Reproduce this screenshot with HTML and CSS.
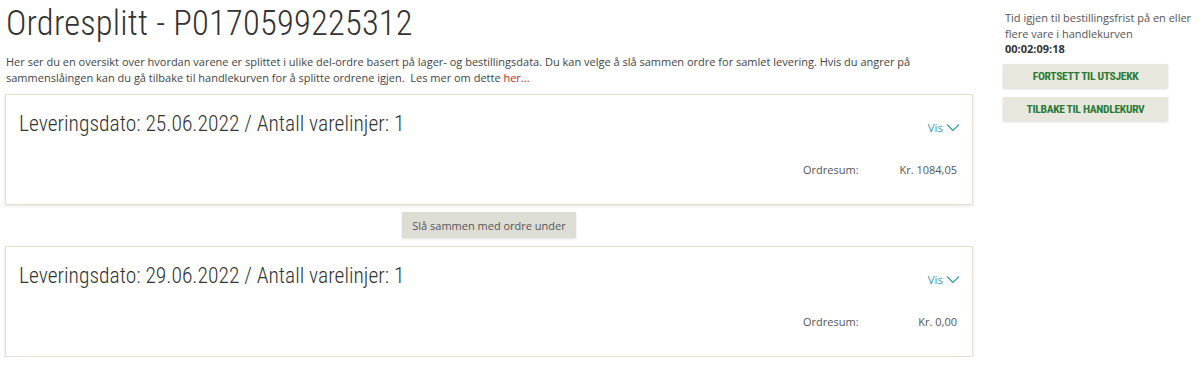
FILE: index.html
```html
<!DOCTYPE html>
<html lang="no">
<head>
<meta charset="utf-8">
<title>Ordresplitt</title>
<link rel="stylesheet" href="styles.css">
</head>
<body>
<div class="page">
  <main class="main">
    <h1 class="title">Ordresplitt - P0170599225312</h1>
    <p class="intro">Her ser du en oversikt over hvordan varene er splittet i ulike del-ordre basert på lager- og bestillingsdata. Du kan velge å slå sammen ordre for samlet levering. Hvis du angrer på sammenslåingen kan du gå tilbake til handlekurven for å splitte ordrene igjen.&nbsp; Les mer om dette <a class="link" href="#">her...</a></p>

    <section class="card">
      <div class="card-head">
        <h2 class="card-title">Leveringsdato: 25.06.2022 / Antall varelinjer: 1</h2>
      </div>
      <div class="card-toggle"><span class="vis">Vis <svg class="chev" viewBox="0 0 14 9" width="14" height="9"><path d="M1 1.5 L7 7.5 L13 1.5" fill="none" stroke="currentColor" stroke-width="1.2"/></svg></span></div>
      <div class="card-sum"><span class="sum-label">Ordresum:</span><span class="sum-value">Kr. 1084,05</span></div>
    </section>

    <div class="merge-row"><button class="merge">Slå sammen med ordre under</button></div>

    <section class="card">
      <div class="card-head">
        <h2 class="card-title">Leveringsdato: 29.06.2022 / Antall varelinjer: 1</h2>
      </div>
      <div class="card-toggle"><span class="vis">Vis <svg class="chev" viewBox="0 0 14 9" width="14" height="9"><path d="M1 1.5 L7 7.5 L13 1.5" fill="none" stroke="currentColor" stroke-width="1.2"/></svg></span></div>
      <div class="card-sum"><span class="sum-label">Ordresum:</span><span class="sum-value">Kr. 0,00</span></div>
    </section>
  </main>

  <aside class="side">
    <p class="deadline">Tid igjen til bestillingsfrist på en eller flere vare i handlekurven<br><strong class="timer">00:02:09:18</strong></p>
    <button class="side-btn">FORTSETT TIL UTSJEKK</button>
    <button class="side-btn">TILBAKE TIL HANDLEKURV</button>
  </aside>
</div>
</body>
</html>
```

FILE: styles.css
```css
* { box-sizing: border-box; }
html, body { margin: 0; padding: 0; background: #fff; }
body {
  font-family: "Open Sans", "Liberation Sans", sans-serif;
  font-size: 11px;
  color: #444;
}
.page {
  display: grid;
  grid-template-columns: 968px 192px;
  column-gap: 30px;
  padding: 0 0 0 5px;
}
.main { display: flex; flex-direction: column; }
.title {
  margin: 0;
  padding: 3px 0 0 1px;
  font-family: "Roboto Condensed", "Liberation Sans Narrow", "DejaVu Sans Condensed", sans-serif;
  font-weight: 300;
  font-size: 34.5px;
  line-height: 40px;
  color: #333;
  letter-spacing: 0.2px;
}
.intro {
  margin: 11px 0 0 1px;
  line-height: 16px;
  color: #444;
  max-width: 940px;
}
.link { color: #c0262c; text-decoration: none; }

.card {
  margin-top: 8px;
  height: 111px;
  border: 1px solid #e3e1d0;
  box-shadow: 0 1px 3px rgba(0,0,0,0.12);
  background: #fff;
  padding: 15px 12px 0 13px;
  display: flex;
  flex-direction: column;
}
.card-title {
  margin: 0;
  font-family: "Roboto Condensed", "Liberation Sans Narrow", "DejaVu Sans Condensed", sans-serif;
  font-weight: 300;
  font-size: 21.5px;
  line-height: 28px;
  color: #333;
}
.card-toggle { display: flex; justify-content: flex-end; margin-top: -18px; }
.vis {
  color: #3a9ab3;
  font-size: 11.5px;
  display: inline-flex;
  align-items: center;
  gap: 3px;
}
.chev { display: block; }
.card-sum {
  display: flex;
  justify-content: flex-end;
  margin-top: 27px;
  padding-right: 3px;
  color: #555;
}
.sum-label { width: 96px; }
.sum-value { min-width: 58px; text-align: right; }

.merge-row { display: flex; justify-content: center; margin-top: 7px; }
.merge {
  font-family: "Open Sans", "Liberation Sans", sans-serif;
  font-size: 11px;
  color: #555;
  background: #deddd5;
  border: 0;
  height: 26px;
  padding: 0 10px;
  box-shadow: 0 1px 2px rgba(0,0,0,0.12);
}
.merge-row + .card { margin-top: 8px; }

.side { padding-top: 10px; }
.deadline { margin: 0 0 0 2px; line-height: 15.5px; color: #555; }
.timer { color: #333; font-weight: 700; }
.side-btn {
  display: block;
  width: 165px;
  height: 24px;
  margin-top: 9px;
  background: #e8e7de;
  border: 0;
  box-shadow: 0 1px 2px rgba(0,0,0,0.15);
  color: #2a7a36;
  font-family: "Roboto Condensed", "Liberation Sans Narrow", "DejaVu Sans Condensed", sans-serif;
  font-weight: 700;
  font-size: 11.5px;
  letter-spacing: -0.3px;
}
.deadline + .side-btn { margin-top: 7px; }
```
